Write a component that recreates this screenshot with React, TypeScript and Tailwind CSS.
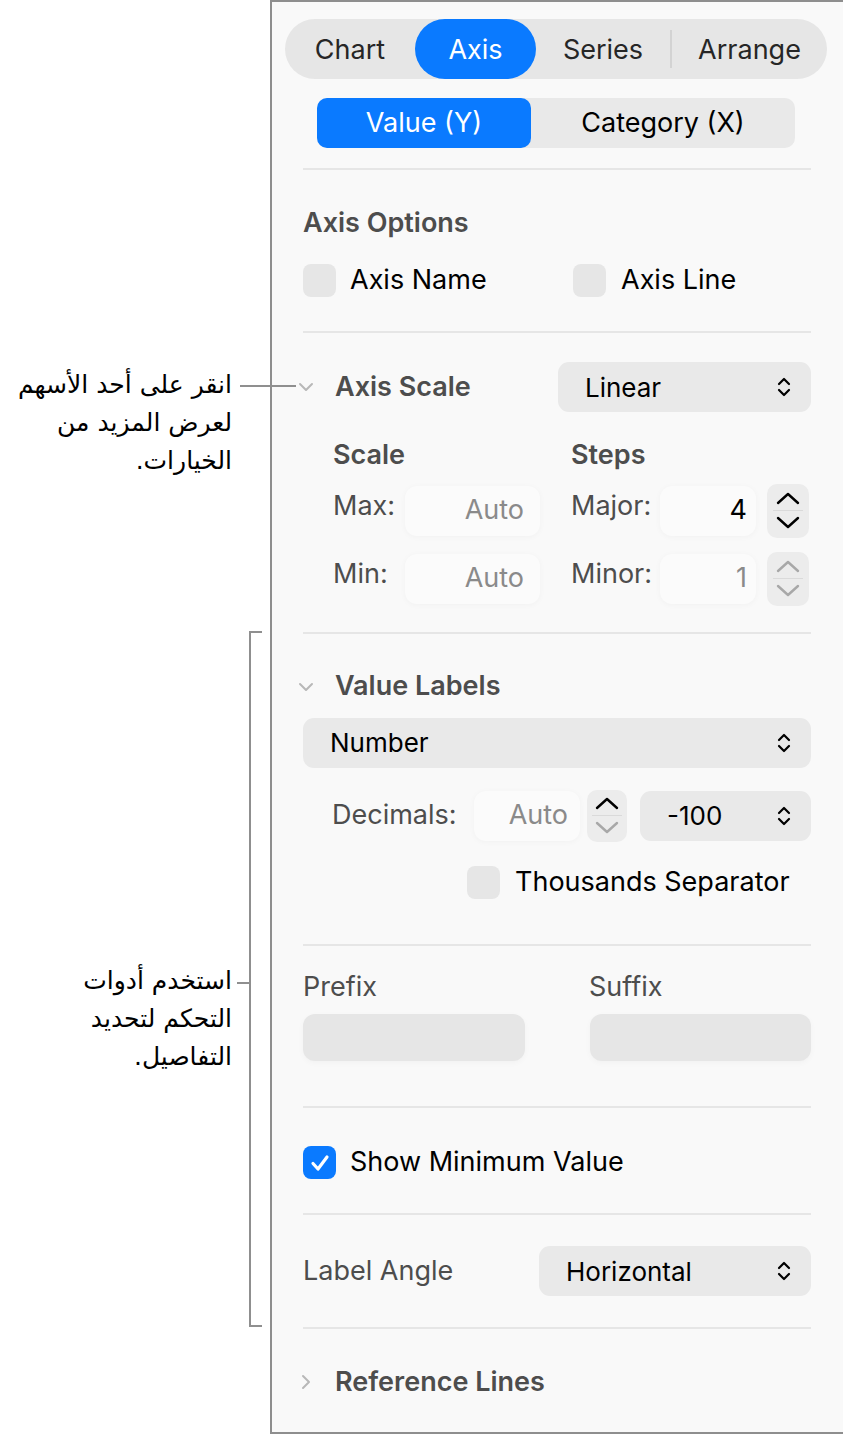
import React from 'react'

const font = "font-['Inter',sans-serif]"

function UpDown({ className = '' }: { className?: string }) {
  return (
    <svg width="14" height="24" viewBox="0 0 14 24" className={className} fill="none">
      <path d="M2 9 L7 4 L12 9" stroke="currentColor" strokeWidth="2.2" strokeLinecap="round" strokeLinejoin="round" />
      <path d="M2 15 L7 20 L12 15" stroke="currentColor" strokeWidth="2.2" strokeLinecap="round" strokeLinejoin="round" />
    </svg>
  )
}

function Caret({ dir, dim }: { dir: 'up' | 'down'; dim?: boolean }) {
  return (
    <svg width="26" height="16" viewBox="0 0 26 16" fill="none" className={dim ? 'text-[#a8a8a8]' : 'text-black'}>
      <path
        d={dir === 'up' ? 'M3 12 L13 3 L23 12' : 'M3 4 L13 13 L23 4'}
        stroke="currentColor"
        strokeWidth="2.4"
        strokeLinecap="round"
        strokeLinejoin="round"
      />
    </svg>
  )
}

function Stepper({ upDim, downDim, small }: { upDim?: boolean; downDim?: boolean; small?: boolean }) {
  return (
    <div
      className={`flex flex-col items-center justify-center rounded-[10px] bg-[#ececec] ${
        small ? 'h-[52px] w-[40px]' : 'h-[54px] w-[42px]'
      }`}
    >
      <Caret dir="up" dim={upDim} />
      <div className="my-[3px] h-px w-[30px] bg-[#dadada]" />
      <Caret dir="down" dim={downDim} />
    </div>
  )
}

function Check({ on }: { on?: boolean }) {
  return (
    <div
      className={`flex h-[33px] w-[33px] shrink-0 items-center justify-center rounded-[8px] ${
        on ? 'bg-[#0a7aff]' : 'bg-[#e6e6e6]'
      }`}
    >
      {on && (
        <svg width="22" height="22" viewBox="0 0 22 22" fill="none">
          <path d="M4 11.5 L9 17 L18 5" stroke="white" strokeWidth="3.2" strokeLinecap="round" strokeLinejoin="round" />
        </svg>
      )}
    </div>
  )
}

function Popup({ label, className = '' }: { label: string; className?: string }) {
  return (
    <div className={`flex h-[50px] items-center justify-between rounded-[11px] bg-[#e9e9e9] pl-[27px] pr-[20px] ${className}`}>
      <span className="text-[26px] text-black">{label}</span>
      <UpDown className="text-black" />
    </div>
  )
}

function Field({ value, dim, className = '' }: { value: string; dim?: boolean; className?: string }) {
  return (
    <div
      className={`flex h-[50px] items-center justify-end rounded-[12px] bg-[#fbfbfb] shadow-[0_1px_6px_rgba(0,0,0,0.035)] ${className}`}
    >
      <span className={`text-[27px] ${dim ? 'text-[#8a8a8a]' : 'text-black'}`}>{value}</span>
    </div>
  )
}

function Rule() {
  return <div className="h-[2px] bg-[#e6e6e6]" />
}

function Disclosure({ open }: { open?: boolean }) {
  return (
    <svg width="16" height="16" viewBox="0 0 16 16" fill="none" className="-ml-[5px] text-[#b8b8b8]">
      <path
        d={open ? 'M2 5 L8 11 L14 5' : 'M5 2 L11 8 L5 14'}
        stroke="currentColor"
        strokeWidth="2"
        strokeLinecap="round"
        strokeLinejoin="round"
      />
    </svg>
  )
}

const heading = 'text-[27px] font-semibold text-[#4d4d4d]'

export default function App() {
  return (
    <div className={`flex h-[1436px] w-[843px] bg-white ${font}`}>
      {/* Callouts */}
      <div className="relative w-[270px] shrink-0">
        <div className="absolute left-[240px] top-[385px] h-[2px] w-[56px] bg-[#8f8f8f]" />
        <p
          dir="rtl"
          className="absolute right-[38px] top-[366px] w-[250px] text-right font-['DejaVu_Sans',sans-serif] text-[25px] leading-[38px] text-black"
        >
          انقر على أحد الأسهم
          <br />
          لعرض المزيد من
          <br />
          الخيارات.
        </p>

        <div className="absolute left-[249px] top-[631px] h-[696px] w-[2px] bg-[#8f8f8f]" />
        <div className="absolute left-[249px] top-[631px] h-[2px] w-[13px] bg-[#8f8f8f]" />
        <div className="absolute left-[249px] top-[1325px] h-[2px] w-[13px] bg-[#8f8f8f]" />
        <div className="absolute left-[237px] top-[982px] h-[2px] w-[13px] bg-[#8f8f8f]" />
        <p
          dir="rtl"
          className="absolute right-[38px] top-[962px] w-[250px] text-right font-['DejaVu_Sans',sans-serif] text-[25px] leading-[38px] text-black"
        >
          استخدم أدوات
          <br />
          التحكم لتحديد
          <br />
          التفاصيل.
        </p>
      </div>

      {/* Inspector panel */}
      <div className="h-[1434px] flex-1 border-y-2 border-l-2 border-[#8e8e8e] bg-[#f9f9f9]">
        <div className="pl-[13px] pr-[16px] pt-[17px]">
          <div className="flex h-[60px] items-center rounded-full bg-[#e6e6e6] text-[27px] text-[#262626]">
            <div className="flex h-[60px] w-[130px] items-center justify-center pt-[3px]">Chart</div>
            <div className="flex h-[60px] w-[121px] items-center justify-center rounded-full bg-[#0a7aff] pt-[3px] text-white">
              Axis
            </div>
            <div className="flex h-[60px] w-[134px] items-center justify-center pt-[3px]">Series</div>
            <div className="h-[38px] w-[2px] bg-[#d3d3d3]" />
            <div className="flex h-[60px] flex-1 items-center justify-center pt-[3px]">Arrange</div>
          </div>
        </div>

        <div className="ml-[45px] mr-[48px] mt-[19px] flex h-[50px] rounded-[10px] bg-[#e9e9e9] text-[27px]">
          <div className="flex w-[214px] items-center justify-center rounded-[10px] bg-[#0a7aff] pt-[1px] text-white">
            Value (Y)
          </div>
          <div className="flex flex-1 items-center justify-center pt-[1px] text-black">Category (X)</div>
        </div>

        <div className="ml-[31px] mr-[32px]">
          <div className="mt-[20px]">
            <Rule />
          </div>

          {/* Axis Options */}
          <div className={`mt-[34px] flex h-[38px] items-center ${heading}`}>Axis Options</div>
          <div className="mt-[22px] flex h-[33px] items-center text-[27px] text-black">
            <div className="flex w-[270px] items-center gap-[14px]">
              <Check />
              Axis Name
            </div>
            <div className="flex items-center gap-[15px]">
              <Check />
              Axis Line
            </div>
          </div>
          <div className="mt-[34px]">
            <Rule />
          </div>

          {/* Axis Scale */}
          <div className="mt-[29px] flex h-[50px] items-center">
            <div className="flex w-[255px] items-center gap-[21px]">
              <Disclosure open />
              <span className={heading}>Axis Scale</span>
            </div>
            <Popup label="Linear" className="flex-1" />
          </div>

          <div className={`mt-[23px] flex pl-[30px] ${heading}`}>
            <span className="w-[238px]">Scale</span>
            <span>Steps</span>
          </div>

          <div className="mt-[8px] flex h-[54px] items-center pl-[30px] text-[27px] text-[#4d4d4d]">
            <span className="w-[72px] self-start pt-[2px]">Max:</span>
            <Field value="Auto" dim className="w-[135px] pr-[16px]" />
            <span className="ml-[31px] w-[89px] self-start pt-[2px]">Major:</span>
            <Field value="4" className="w-[96px] pr-[9px]" />
            <div className="ml-[11px]">
              <Stepper />
            </div>
          </div>

          <div className="mt-[14px] flex h-[54px] items-center pl-[30px] text-[27px] text-[#4d4d4d]">
            <span className="w-[72px] self-start pt-[2px]">Min:</span>
            <Field value="Auto" dim className="w-[135px] pr-[16px]" />
            <span className="ml-[31px] w-[89px] self-start pt-[2px]">Minor:</span>
            <Field value="1" dim className="w-[96px] pr-[9px]" />
            <div className="ml-[11px]">
              <Stepper upDim downDim />
            </div>
          </div>

          <div className="mt-[26px]">
            <Rule />
          </div>

          {/* Value Labels */}
          <div className="mt-[36px] flex h-[34px] items-center gap-[21px]">
            <Disclosure open />
            <span className={heading}>Value Labels</span>
          </div>
          <Popup label="Number" className="mt-[14px]" />

          <div className="mt-[22px] flex h-[52px] items-center pl-[29px]">
            <span className="w-[142px] text-[27px] text-[#4d4d4d]">Decimals:</span>
            <Field value="Auto" dim className="w-[106px] pr-[12px]" />
            <div className="ml-[7px]">
              <Stepper downDim small />
            </div>
            <Popup label="-100" className="ml-[13px] flex-1 pl-[26px]" />
          </div>

          <div className="mt-[24px] flex h-[33px] items-center gap-[15px] pl-[164px] text-[27px] text-black">
            <Check />
            Thousands Separator
          </div>

          <div className="mt-[45px]">
            <Rule />
          </div>

          {/* Prefix / Suffix */}
          <div className="mt-[21px] flex text-[27px] text-[#4d4d4d]">
            <span className="w-[286px]">Prefix</span>
            <span>Suffix</span>
          </div>
          <div className="mt-[7px] flex gap-[65px]">
            <div className="h-[47px] flex-1 rounded-[12px] bg-[#e6e6e6] shadow-[0_2px_6px_rgba(0,0,0,0.03)]" />
            <div className="h-[47px] flex-1 rounded-[12px] bg-[#e6e6e6] shadow-[0_2px_6px_rgba(0,0,0,0.03)]" />
          </div>

          <div className="mt-[45px]">
            <Rule />
          </div>

          <div className="mt-[38px] flex h-[33px] items-center gap-[14px] text-[27px] text-black">
            <Check on />
            Show Minimum Value
          </div>

          <div className="mt-[34px]">
            <Rule />
          </div>

          <div className="mt-[31px] flex h-[50px] items-center">
            <span className="w-[236px] text-[27px] text-[#4d4d4d]">Label Angle</span>
            <Popup label="Horizontal" className="flex-1" />
          </div>

          <div className="mt-[31px]">
            <Rule />
          </div>

          <div className="mt-[36px] flex h-[34px] items-center gap-[21px]">
            <Disclosure />
            <span className={heading}>Reference Lines</span>
          </div>
        </div>
      </div>
    </div>
  )
}
